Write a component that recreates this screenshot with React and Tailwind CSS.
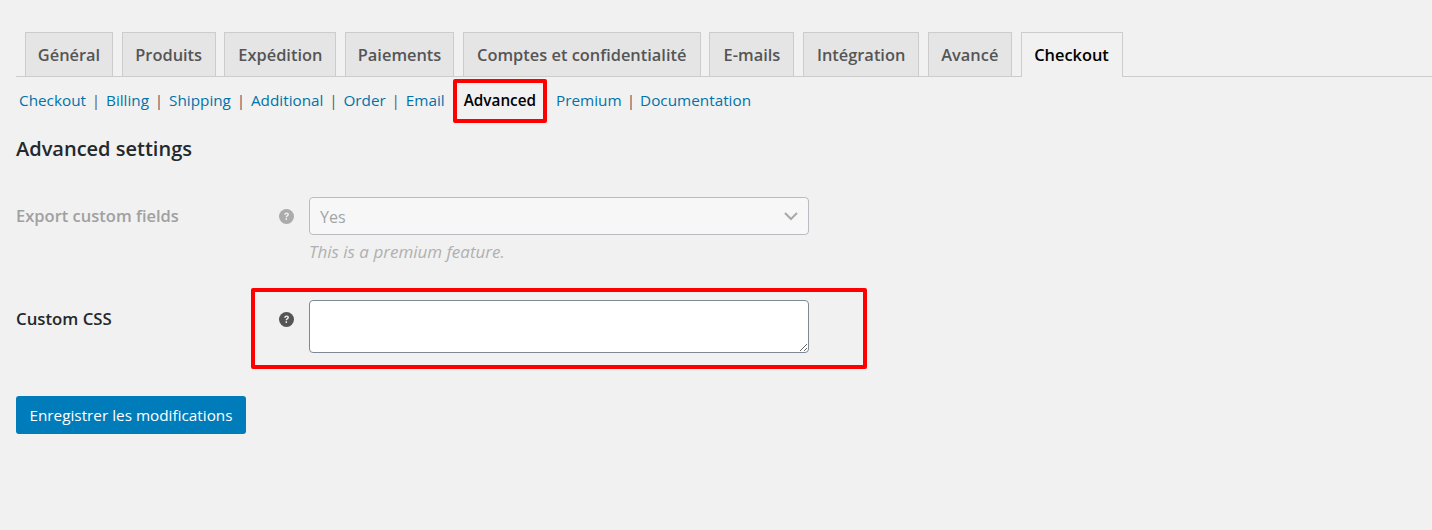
import React from "react";

const tabs = [
  { label: "Général", cls: "w-[88px]" },
  { label: "Produits", cls: "w-[94px]" },
  { label: "Expédition", cls: "w-[112px]" },
  { label: "Paiements", cls: "w-[109px]" },
  { label: "Comptes et confidentialité", cls: "w-[238px]" },
  { label: "E-mails", cls: "w-[85px]" },
  { label: "Intégration", cls: "w-[116px]" },
  { label: "Avancé", cls: "w-[84px]" },
];

const links = ["Checkout", "Billing", "Shipping", "Additional", "Order", "Email"];

function HelpIcon({ className }) {
  return (
    <svg viewBox="0 0 20 20" className={className}>
      <circle cx="10" cy="10" r="10" fill="currentColor" />
      <path
        d="M6.9 7.6c.2-1.9 1.5-2.9 3.3-2.9 1.8 0 3 1 3 2.5 0 1.2-.7 1.8-1.5 2.3-.8.5-1 .8-1 1.6H8.9c0-1.4.4-2 1.3-2.6.7-.4 1-.7 1-1.2 0-.6-.4-.9-1-.9-.7 0-1.1.4-1.2 1.2H6.9z"
        fill="#f1f1f1"
      />
      <rect x="8.8" y="12.3" width="1.9" height="2.3" fill="#f1f1f1" />
    </svg>
  );
}

export default function App() {
  return (
    <div className="min-h-[530px] bg-[#f1f1f1] pl-4 pt-8 font-['Open_Sans','Noto_Sans',sans-serif] text-[15px]">
      <div className="flex h-[45px] gap-[8.7px] border-b border-[#cccccc] pl-[9px]">
        {tabs.map((t) => (
          <div
            key={t.label}
            className={`${t.cls} flex h-[44px] items-center justify-center border border-b-0 border-[#cccccc] bg-[#e5e5e5] pt-[1px] text-[16.4px] font-semibold text-[#555555]`}
          >
            {t.label}
          </div>
        ))}
        <div className="flex h-[45px] w-[102px] items-center justify-center border border-b-0 border-[#cccccc] bg-[#f1f1f1] text-[16.4px] font-semibold text-black">
          Checkout
        </div>
      </div>

      <div className="flex h-[47px] items-center pl-[3px] text-[15.3px] text-[#0073aa]">
        {links.map((l) => (
          <React.Fragment key={l}>
            <span>{l}</span>
            {l !== "Email" && <span className="mx-[5.8px] text-[#555d66]">|</span>}
          </React.Fragment>
        ))}
        <span className="relative ml-[19px] font-semibold text-black">
          Advanced
          <span className="absolute -left-[11px] -right-[11px] -top-[10px] -bottom-[11px] rounded-[2px] border-4 border-[#ff0000]" />
        </span>
        <span className="ml-[20px]">Premium</span>
        <span className="mx-[5px] text-[#555d66]">|</span>
        <span>Documentation</span>
      </div>

      <h2 className="mt-[10px] text-[20px] font-semibold leading-[30px] text-[#23282d]">
        Advanced settings
      </h2>

      <div className="mt-[33px] flex">
        <div className="w-[263px] pt-[7px] text-[16.5px] font-semibold leading-[24px] text-[#a0a0a0]">
          Export custom fields
        </div>
        <HelpIcon className="mt-[12px] h-[15px] w-[15px] text-[#ababab]" />
        <div className="ml-[15px]">
          <div className="flex h-[38px] w-[500px] items-center justify-between rounded-[4px] border border-[#b9bcc0] bg-[#f7f7f7] pl-[10px] pr-[10px] pt-[1px] text-[16px] text-[#a0a5aa]">
            <span>Yes</span>
            <svg viewBox="0 0 14 9" className="h-[9px] w-[14px]" fill="none" stroke="#a9a9a9" strokeWidth="2">
              <path d="M1 1l6 6 6-6" />
            </svg>
          </div>
          <p className="mt-[5px] text-[17px] italic leading-[24px] text-[#b0b0b0]">
            This is a premium feature.
          </p>
        </div>
      </div>

      <div className="mt-[36px] flex">
        <div className="w-[263px] pt-[7px] text-[16.8px] font-semibold leading-[24px] text-[#23282d]">
          Custom CSS
        </div>
        <HelpIcon className="mt-[12px] h-[15px] w-[15px] text-[#555555]" />
        <div className="relative ml-[15px]">
          <textarea className="block h-[53px] w-[500px] rounded-[4px] border border-[#7e8993] bg-white" />
          <span className="pointer-events-none absolute -left-[58px] -right-[58px] -top-[12px] -bottom-[16px] rounded-[2px] border-4 border-[#ff0000]" />
        </div>
      </div>

      <button className="mt-[43px] flex h-[38px] w-[230px] items-center justify-center rounded-[3px] bg-[#007cba] text-[15.3px] text-white">
        Enregistrer les modifications
      </button>
    </div>
  );
}
